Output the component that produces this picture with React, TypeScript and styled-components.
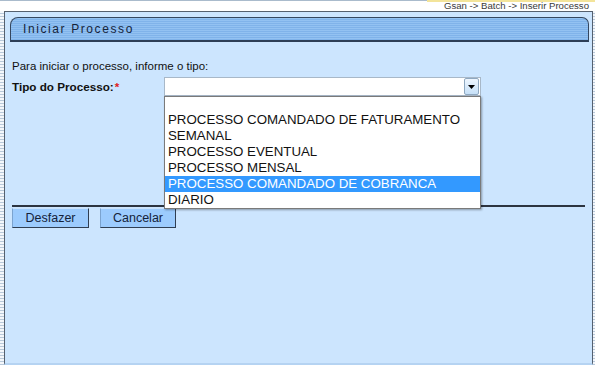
import React from "react";
import styled, { createGlobalStyle } from "styled-components";

const Global = createGlobalStyle`
  html, body { margin: 0; padding: 0; background: #ffffff; }
  body { font-family: "Liberation Sans", Arial, sans-serif; }
  #root { width: 595px; height: 365px; overflow: hidden; }
`;

const Page = styled.div`
  width: 595px;
  height: 365px;
  display: flex;
  flex-direction: column;
  background: #ffffff;
`;

const TopBar = styled.div`
  position: relative;
  height: 11px;
  flex: none;
  border-top: 1px solid #aabbcc;
  box-sizing: border-box;
  display: flex;
  justify-content: flex-end;
  align-items: flex-start;
  padding-right: 6px;
`;

const YellowLine = styled.div`
  position: absolute;
  top: -1px;
  right: 0;
  width: 168px;
  height: 2px;
  background: #f3e49a;
`;

const Breadcrumb = styled.span`
  font-size: 9.6px;
  line-height: 10px;
  color: #3a3a3a;
`;

const Body = styled.div`
  flex: 1;
  display: flex;
`;

const Stripe = styled.div<{ $w: number }>`
  width: ${(p) => p.$w}px;
  flex: none;
  background: repeating-linear-gradient(
    to bottom,
    #f4f7fb 0px,
    #f4f7fb 2px,
    #b9c9da 2px,
    #b9c9da 3px
  );
`;

const Panel = styled.div`
  flex: 1;
  background: #cce5fe;
  border-left: 1px solid #55606e;
  border-top: 1px solid #55606e;
  border-right: 1px solid #55606e;
  border-bottom: 2px solid #b5d3f2;
  padding: 5px 3px 0 5px;
  display: flex;
  flex-direction: column;
`;

const HeaderBar = styled.div`
  height: 25px;
  box-sizing: border-box;
  border: 1px solid #35475f;
  border-bottom: 2px solid #2d3e56;
  border-radius: 8px 7px 0 0;
  background: repeating-linear-gradient(
    to bottom,
    #93c2f2 0px,
    #93c2f2 1px,
    #80b3ea 1px,
    #80b3ea 2px
  );
  display: flex;
  align-items: center;
  padding-left: 12px;
`;

const HeaderTitle = styled.span`
  font-size: 12px;
  letter-spacing: 1.6px;
  color: #16243a;
`;

const Content = styled.div`
  padding: 0 0 0 2px;
  display: flex;
  flex-direction: column;
`;

const Intro = styled.div`
  margin-top: 18px;
  font-size: 11.5px;
  line-height: 13px;
  color: #111;
`;

const FormRow = styled.div`
  margin-top: 4px;
  display: flex;
  align-items: flex-start;
  height: 19px;
`;

const Label = styled.div`
  width: 152px;
  font-size: 11.7px;
  font-weight: bold;
  color: #111;
  padding-top: 3px;
`;

const Required = styled.span`
  color: #e02020;
  font-weight: bold;
  margin-left: 1px;
`;

const SelectWrap = styled.div`
  position: relative;
  width: 317px;
  height: 19px;
`;

const SelectBox = styled.div`
  width: 100%;
  height: 19px;
  box-sizing: border-box;
  background: #ffffff;
  border: 1px solid #a8b8c8;
  display: flex;
  justify-content: flex-end;
  padding: 0 1px 1px 0;
`;

const ArrowButton = styled.div`
  width: 15px;
  height: 17px;
  box-sizing: border-box;
  border: 1px solid #8fa8c0;
  border-radius: 2px;
  background: linear-gradient(to bottom, #eef6fe, #c6e0f8);
  display: flex;
  align-items: center;
  justify-content: center;
`;

const ListBox = styled.div`
  position: absolute;
  top: 19px;
  left: 0;
  width: 317px;
  height: 113px;
  box-sizing: border-box;
  background: #ffffff;
  border: 1px solid #7a7a7a;
  box-shadow: 1px 1px 2px rgba(0, 0, 0, 0.35);
  z-index: 5;
`;

const Option = styled.div<{ $selected?: boolean; $blank?: boolean }>`
  height: ${(p) => (p.$blank ? 15 : 16)}px;
  line-height: 16px;
  font-size: 13.3px;
  padding-left: 3px;
  white-space: nowrap;
  color: ${(p) => (p.$selected ? "#ffffff" : "#111111")};
  background: ${(p) => (p.$selected ? "#3399ff" : "transparent")};
`;

const Divider = styled.div`
  margin-top: 109px;
  width: 573px;
  height: 2px;
  background: #2c3440;
`;

const Buttons = styled.div`
  margin-top: 1px;
  display: flex;
  gap: 11px;
`;

const Button = styled.button<{ $w: number }>`
  width: ${(p) => p.$w}px;
  height: 20px;
  box-sizing: border-box;
  background: #9ccbfd;
  border: 1px solid;
  border-color: #c9e2fc #2f3e52 #2f3e52 #7ba3cf;
  font-family: "Liberation Sans", Arial, sans-serif;
  font-size: 12.5px;
  color: #14223a;
  padding: 0;
  cursor: pointer;
`;

const options = [
  "",
  "PROCESSO COMANDADO DE FATURAMENTO",
  "SEMANAL",
  "PROCESSO EVENTUAL",
  "PROCESSO MENSAL",
  "PROCESSO COMANDADO DE COBRANCA",
  "DIARIO",
];

export default function App() {
  return (
    <>
      <Global />
      <Page>
        <TopBar>
          <YellowLine />
          <Breadcrumb>Gsan -&gt; Batch -&gt; Inserir Processo</Breadcrumb>
        </TopBar>
        <Body>
          <Stripe $w={4} />
          <Panel>
            <HeaderBar>
              <HeaderTitle>Iniciar Processo</HeaderTitle>
            </HeaderBar>
            <Content>
              <Intro>Para iniciar o processo, informe o tipo:</Intro>
              <FormRow>
                <Label>
                  Tipo do Processo:<Required>*</Required>
                </Label>
                <SelectWrap>
                  <SelectBox>
                    <ArrowButton>
                      <svg width="7" height="4" viewBox="0 0 7 4">
                        <polygon points="0,0 7,0 3.5,4" fill="#000" />
                      </svg>
                    </ArrowButton>
                  </SelectBox>
                  <ListBox>
                    {options.map((o, i) => (
                      <Option key={i} $selected={i === 5} $blank={i === 0}>
                        {o || "\u00a0"}
                      </Option>
                    ))}
                  </ListBox>
                </SelectWrap>
              </FormRow>
              <Divider />
              <Buttons>
                <Button $w={77}>Desfazer</Button>
                <Button $w={76}>Cancelar</Button>
              </Buttons>
            </Content>
          </Panel>
          <Stripe $w={2} />
        </Body>
      </Page>
    </>
  );
}
